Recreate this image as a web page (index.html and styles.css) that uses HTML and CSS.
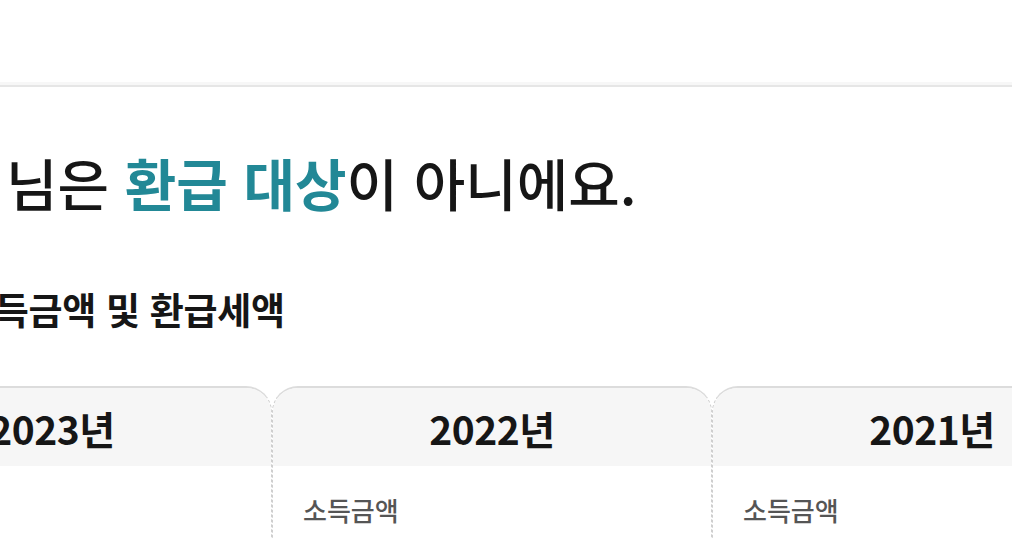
FILE: index.html
```html
<!DOCTYPE html>
<html lang="ko">
<head>
<meta charset="utf-8">
<link rel="stylesheet" href="styles.css">
</head>
<body>
<header class="topbar"></header>
<main class="content">
  <h1 class="title">님은 <span class="accent">환급 대상</span>이 아니에요.</h1>
  <h2 class="subtitle">소득금액 및 환급세액</h2>
  <div class="cards">
    <section class="card">
      <div class="card-head">2023년</div>
      <div class="card-body"><div class="label">소득금액</div></div>
    </section>
    <section class="card">
      <div class="card-head">2022년</div>
      <div class="card-body"><div class="label">소득금액</div></div>
    </section>
    <section class="card">
      <div class="card-head">2021년</div>
      <div class="card-body"><div class="label">소득금액</div></div>
    </section>
  </div>
</main>
</body>
</html>
```
FILE: styles.css
```css
html, body {
  margin: 0;
  padding: 0;
  background: #ffffff;
  overflow: hidden;
}
body {
  width: 1012px;
  height: 538px;
  font-family: "Noto Sans CJK KR", "Noto Sans", sans-serif;
  color: #161616;
}
.topbar {
  height: 85px;
  border-bottom: 2px solid #e6e6e6;
  box-shadow: 0 -3px 0 #f7f7f7 inset;
}
.content {
  padding-top: 58px;
}
.title {
  margin: 0 0 0 6px;
  font-size: 56px;
  line-height: 74px;
  font-weight: 500;
  letter-spacing: 0;
}
.accent {
  color: #228896;
  font-weight: 700;
}
.subtitle {
  margin: 66px 0 0 -39px;
  font-size: 37px;
  line-height: 48px;
  font-weight: 700;
  letter-spacing: -0.3px;
}
.cards {
  display: flex;
  margin: 53px 0 0 -168px;
}
.card {
  flex: 0 0 440px;
  box-sizing: border-box;
  border-top: 2px solid #dcdcdc;
  border-left: 1px dashed #cfcfcf;
  border-right: 1px dashed #cfcfcf;
  border-radius: 26px 26px 0 0;
  height: 200px;
  overflow: hidden;
}
.card-head {
  height: 78px;
  background: #f6f6f6;
  display: flex;
  align-items: center;
  justify-content: center;
  font-size: 39px;
  font-weight: 700;
  letter-spacing: -0.5px;
  padding-top: 2px;
  box-sizing: border-box;
}
.card-body {
  padding: 27px 30px 0;
}
.label {
  font-size: 26px;
  line-height: 34px;
  font-weight: 500;
  color: #555555;
}
```
